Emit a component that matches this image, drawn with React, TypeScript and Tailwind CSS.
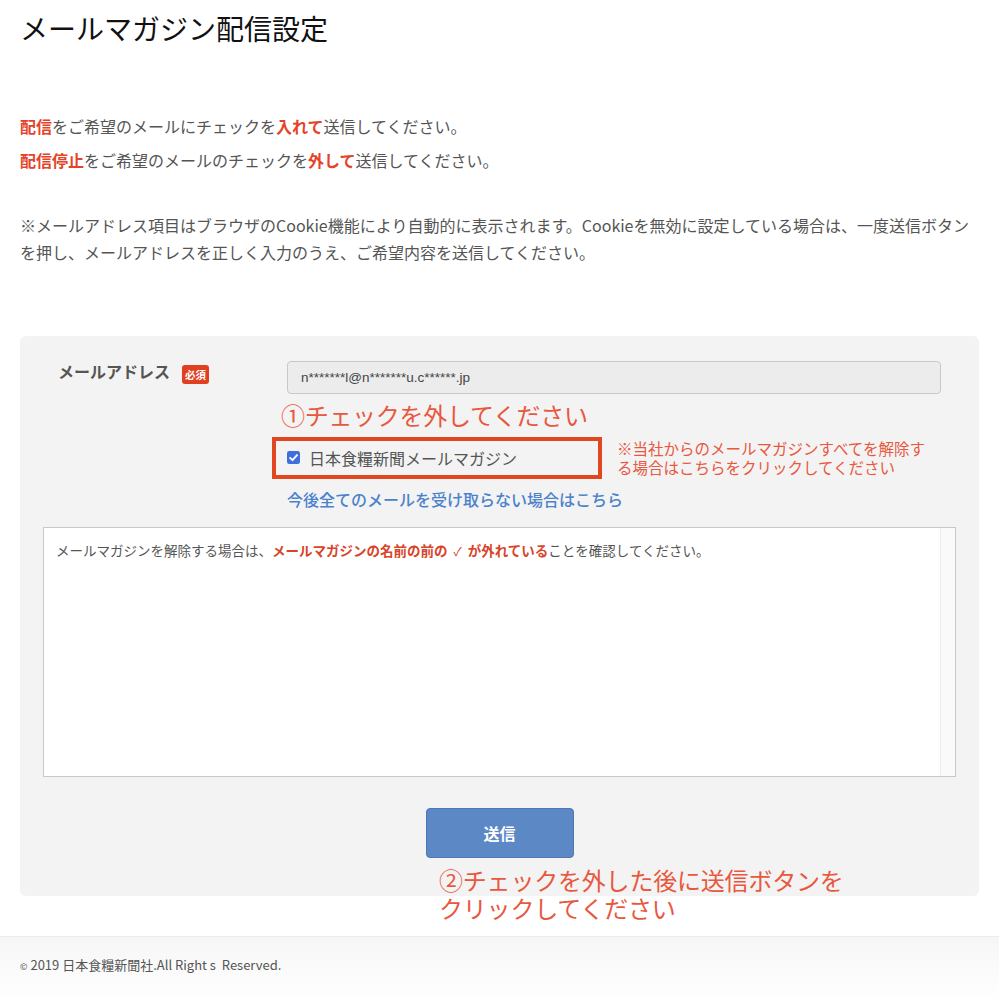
const jp = { fontFamily: '"Noto Sans CJK JP", "Liberation Sans", sans-serif' };

const CheckMark = () => (
  <svg viewBox="0 0 14 14" className="h-[13px] w-[13px]">
    <rect x="0" y="0" width="14" height="14" rx="2.5" fill="#3f6fdc" />
    <path d="M3.3 7.4 L5.9 9.9 L10.8 4.4" stroke="#fff" strokeWidth="2" fill="none" strokeLinecap="round" strokeLinejoin="round" />
  </svg>
);

export default function App() {
  return (
    <div className="min-h-[1001px] bg-white text-[#555]" style={jp}>
      <div className="px-5">
        <h1 className="pt-[11px] text-[28px] leading-[34px] font-normal text-[#111]">メールマガジン配信設定</h1>

        <div className="mt-[64px] text-[16px] leading-[34px]">
          <p>
            <b className="font-bold text-[#e4432a]">配信</b>をご希望のメールにチェックを
            <b className="font-bold text-[#e4432a]">入れて</b>送信してください。
          </p>
          <p>
            <b className="font-bold text-[#e4432a]">配信停止</b>をご希望のメールのチェックを
            <b className="font-bold text-[#e4432a]">外して</b>送信してください。
          </p>
        </div>

        <p className="mt-[35px] text-[16px] leading-[27px]">
          ※メールアドレス項目はブラウザのCookie機能により自動的に表示されます。Cookieを無効に設定している場合は、一度送信ボタンを押し、メールアドレスを正しく入力のうえ、ご希望内容を送信してください。
        </p>

        {/* form panel */}
        <div className="relative mt-[70px] h-[560px] rounded-md bg-[#f3f3f3] px-[23px] pt-[25px]">
          <div className="flex px-[15px]">
            <div className="flex w-[229px] shrink-0 items-start">
              <span className="-mt-[2px] text-[16px] leading-[24px] font-bold text-[#555]">メールアドレス</span>
              <span className="ml-[12px] mt-[4px] rounded-[3px] bg-[#e0401f] px-[3px] text-[10.5px] leading-[19px] font-bold text-white">必須</span>
            </div>

            <div className="flex-1">
              <div
                className="h-[33px] rounded-[4px] border border-[#c9c9c9] bg-[#ececec] pl-[13px] text-[13.5px] leading-[31px] text-[#444]"
                style={{ fontFamily: '"Liberation Sans", sans-serif' }}
              >
                n*******l@n*******u.c******.jp
              </div>

              <div className="-ml-[6px] mt-[6px] text-[24px] leading-[30px] tracking-[-0.3px] text-[#e8583f]">①チェックを外してください</div>

              <div className="mt-[11px] flex items-start">
                <div className="relative flex h-[33px] w-[299px] items-center">
                  <div className="pointer-events-none absolute -top-[4px] -left-[15px] h-[42px] w-[330px] border-[4px] border-[#e0461f]" />
                  <CheckMark />
                  <span className="ml-[9px] text-[16px] leading-[24px] text-[#555]">日本食糧新聞メールマガジン</span>
                </div>
                <p className="ml-[31px] -mt-[2px] w-[320px] text-[15.5px] leading-[19px] text-[#e8583f]">
                  ※当社からのメールマガジンすべてを解除する場合はこちらをクリックしてください
                </p>
              </div>

              <a className="mt-[10px] block text-[16px] leading-[24px] font-medium text-[#4b82cc]">今後全てのメールを受け取らない場合はこちら</a>
            </div>
          </div>

          {/* message area */}
          <div className="mt-[16px] flex h-[250px] border border-[#c8c8c8] bg-white">
            <p className="flex-1 px-[12px] pt-[12px] text-[13.5px] leading-[20px] text-[#555]">
              メールマガジンを解除する場合は、
              <b className="font-bold text-[#d8442a]">
                メールマガジンの名前の前の<span className="mx-[6px] font-normal text-[12px]">✓</span>が外れている
              </b>
              ことを確認してください。
            </p>
            <div className="w-[15px] border-l border-[#ececec] bg-[#fafafa]" />
          </div>

          <div className="mt-[31px] flex justify-center">
            <button className="h-[50px] w-[148px] rounded-[4px] border border-[#4d78b8] bg-[#5c88c6] text-[16px] font-bold text-white">
              送信
            </button>
          </div>

          <div className="absolute left-[419px] top-[530px] text-[24px] leading-[28px] tracking-[-0.2px] text-[#e8583f]">
            ②チェックを外した後に送信ボタンを
            <br />
            クリックしてください
          </div>
        </div>
      </div>

      <footer className="mt-[40px] h-[65px] border-t border-[#ececec] bg-gradient-to-b from-[#f6f6f6] to-white px-5 pt-[18px]">
        <p className="text-[13px] leading-[20px] text-[#555]">
          <span className="text-[9px]">©</span> 2019 日本食糧新聞社.All Right s&nbsp; Reserved.
        </p>
      </footer>
    </div>
  );
}
